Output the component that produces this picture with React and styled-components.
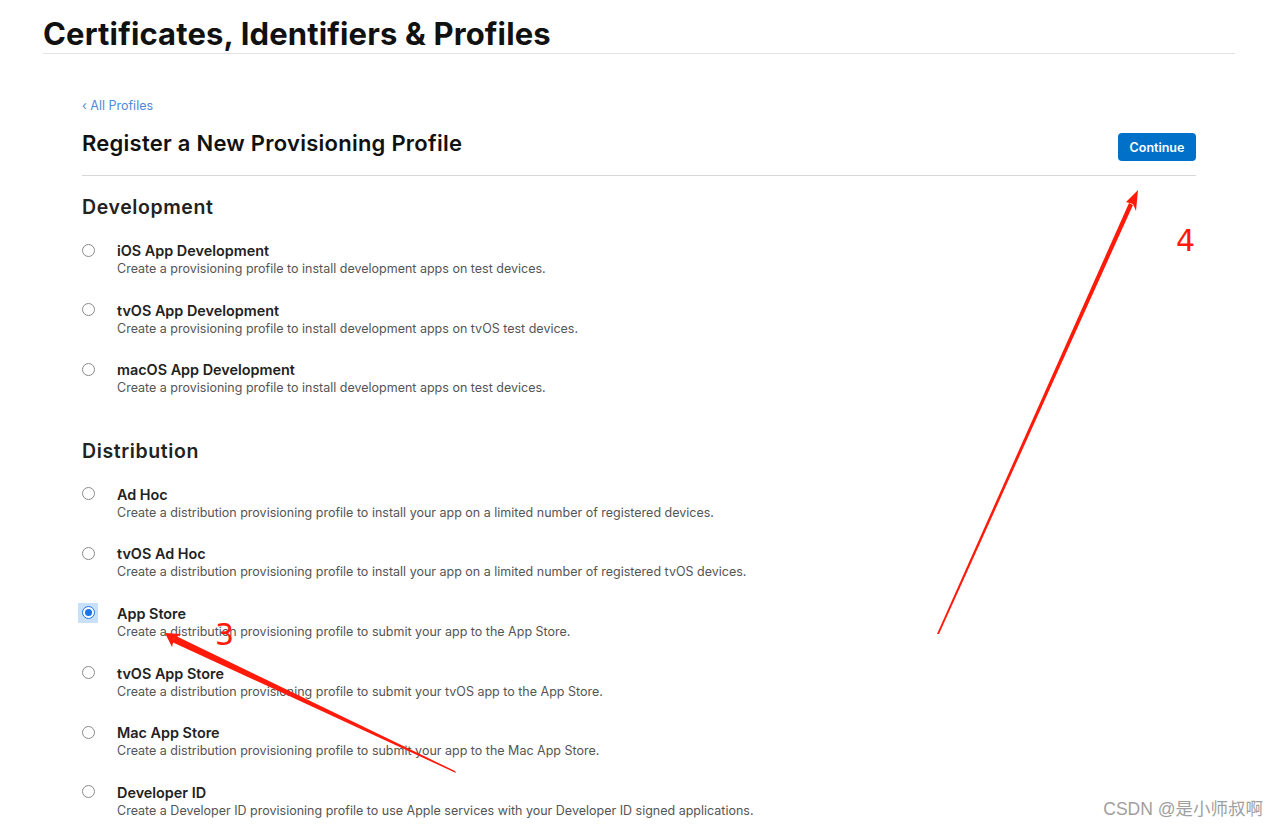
import React from "react";
import styled, { createGlobalStyle } from "styled-components";

const GlobalStyle = createGlobalStyle`
  html, body {
    margin: 0;
    padding: 0;
    background: #fff;
    font-family: Inter, "Noto Sans", sans-serif;
    color: #111;
  }
`;

const development = [
  { title: "iOS App Development", desc: "Create a provisioning profile to install development apps on test devices." },
  { title: "tvOS App Development", desc: "Create a provisioning profile to install development apps on tvOS test devices." },
  { title: "macOS App Development", desc: "Create a provisioning profile to install development apps on test devices." },
];

const distribution = [
  { title: "Ad Hoc", desc: "Create a distribution provisioning profile to install your app on a limited number of registered devices." },
  { title: "tvOS Ad Hoc", desc: "Create a distribution provisioning profile to install your app on a limited number of registered tvOS devices." },
  { title: "App Store", desc: "Create a distribution provisioning profile to submit your app to the App Store.", checked: true },
  { title: "tvOS App Store", desc: "Create a distribution provisioning profile to submit your tvOS app to the App Store." },
  { title: "Mac App Store", desc: "Create a distribution provisioning profile to submit your app to the Mac App Store." },
  { title: "Developer ID", desc: "Create a Developer ID provisioning profile to use Apple services with your Developer ID signed applications." },
];

const App = () => {
  return (
    <Page>
      <GlobalStyle />
      <Header>
        <h1>Certificates, Identifiers &amp; Profiles</h1>
      </Header>
      <Content>
        <BackLink>‹ All Profiles</BackLink>
        <TitleRow>
          <h2>Register a New Provisioning Profile</h2>
          <ContinueButton>Continue</ContinueButton>
        </TitleRow>
        <Section>
          <SectionTitle>Development</SectionTitle>
          {development.map((o) => (
            <Option key={o.title} {...o} />
          ))}
        </Section>
        <Section $distribution>
          <SectionTitle>Distribution</SectionTitle>
          {distribution.map((o) => (
            <Option key={o.title} {...o} />
          ))}
        </Section>
      </Content>

      <Annotations width="1280" height="829" viewBox="0 0 1280 829">
        <polygon points="937,634 939,634 1133,205 1129,203" fill="#ff1a0a" />
        <polygon points="1138,190 1126,202 1133,204 1136,211" fill="#ff1a0a" />
        <polygon points="456,773 455,771 176,636 172,642" fill="#ff1a0a" />
        <polygon points="165,633 172,647 174,639 181,634" fill="#ff1a0a" />
      </Annotations>
      <Mark $x={1176} $y={223}>4</Mark>
      <Mark $x={215} $y={617}>3</Mark>
      <Watermark>CSDN @是小师叔啊</Watermark>
    </Page>
  );
};

const Option = ({ title, desc, checked }) => (
  <OptionRow>
    <RadioWrap $checked={checked}>
      <Radio $checked={checked} />
    </RadioWrap>
    <OptionText>
      <OptionTitle>{title}</OptionTitle>
      <OptionDesc>{desc}</OptionDesc>
    </OptionText>
  </OptionRow>
);

const Page = styled.div`
  position: relative;
  width: 1280px;
  height: 829px;
  overflow: hidden;
`;

const Header = styled.div`
  margin: 0 45px 0 43px;
  padding-top: 14px;
  border-bottom: 1px solid #e3e3e3;
  h1 {
    margin: 0;
    font-size: 31px;
    font-weight: 700;
    letter-spacing: 0.15px;
    line-height: 39px;
    color: #111;
  }
`;

const Content = styled.div`
  margin: 0 84px 0 82px;
  padding-top: 44px;
`;

const BackLink = styled.div`
  font-size: 12.5px;
  color: #4f8ad8;
  line-height: 16px;
`;

const TitleRow = styled.div`
  display: flex;
  justify-content: space-between;
  align-items: flex-start;
  margin-top: 15px;
  padding-bottom: 14px;
  border-bottom: 1px solid #d8d8d8;
  h2 {
    margin: 0;
    font-size: 22px;
    font-weight: 600;
    letter-spacing: 0.25px;
    line-height: 28px;
    color: #111;
  }
`;

const ContinueButton = styled.button`
  margin-top: 4px;
  width: 78px;
  height: 28px;
  border: none;
  border-radius: 4px;
  background: #0070c9;
  color: #fff;
  font-family: Inter, sans-serif;
  font-size: 12.5px;
  font-weight: 600;
  padding: 0;
`;

const Section = styled.div`
  padding-top: ${(p) => (p.$distribution ? "18px" : "18px")};
`;

const SectionTitle = styled.div`
  font-size: 19.5px;
  font-weight: 600;
  line-height: 26px;
  letter-spacing: 0.6px;
  color: #222;
  margin-bottom: 21px;
`;

const OptionRow = styled.div`
  display: flex;
  align-items: flex-start;
  height: 59.6px;
`;

const RadioWrap = styled.div`
  width: 20px;
  height: 20px;
  margin: -1px 19px 0 -4px;
  display: flex;
  align-items: center;
  justify-content: center;
  background: ${(p) => (p.$checked ? "#c9e0fb" : "transparent")};
`;

const Radio = styled.span`
  box-sizing: border-box;
  width: 13px;
  height: 13px;
  border-radius: 50%;
  background: #fff;
  border: ${(p) => (p.$checked ? "1px solid #1a73e8" : "1px solid #8a8a8a")};
  display: flex;
  align-items: center;
  justify-content: center;
  &::after {
    content: "";
    display: ${(p) => (p.$checked ? "block" : "none")};
    width: 7px;
    height: 7px;
    border-radius: 50%;
    background: #1a73e8;
  }
`;

const OptionText = styled.div`
  display: flex;
  flex-direction: column;
`;

const OptionTitle = styled.div`
  font-size: 14.4px;
  font-weight: 600;
  line-height: 19px;
  color: #222;
`;

const OptionDesc = styled.div`
  font-size: 12.5px;
  line-height: 17px;
  color: #555;
`;

const Annotations = styled.svg`
  position: absolute;
  left: 0;
  top: 0;
  pointer-events: none;
`;

const Mark = styled.div`
  position: absolute;
  left: ${(p) => p.$x}px;
  top: ${(p) => p.$y}px;
  font-family: "DejaVu Sans", sans-serif;
  font-weight: 400;
  font-size: 30px;
  line-height: 36px;
  color: #ff1a0a;
`;

const Watermark = styled.div`
  position: absolute;
  right: 17px;
  bottom: 9px;
  font-family: "Liberation Sans", "Noto Sans CJK SC", sans-serif;
  font-size: 17.5px;
  color: #a0a0a0;
`;

export default App;
